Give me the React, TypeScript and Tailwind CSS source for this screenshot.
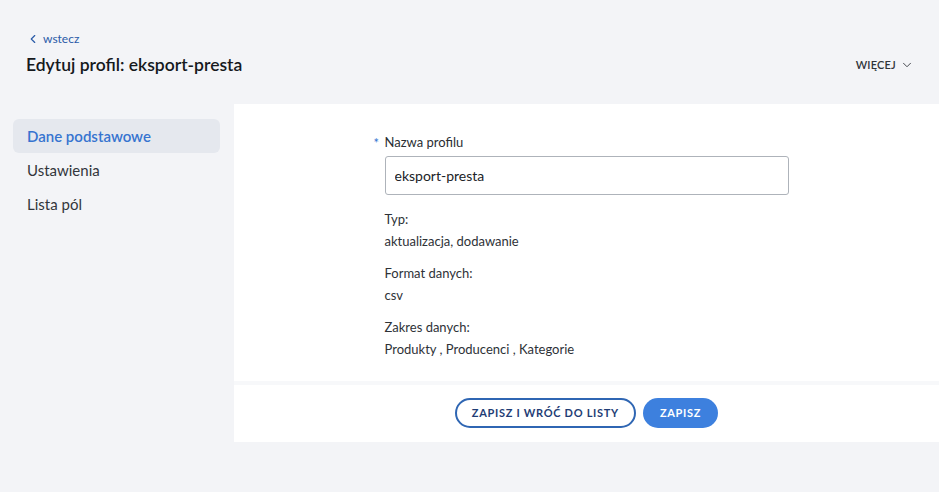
import { ChevronLeft, ChevronDown } from "lucide-react";

const details = [
  { label: "Typ:", value: "aktualizacja, dodawanie" },
  { label: "Format danych:", value: "csv" },
  { label: "Zakres danych:", value: "Produkty , Producenci , Kategorie" },
];

const nav = ["Dane podstawowe", "Ustawienia", "Lista pól"];

export default function App() {
  return (
    <div className="min-h-screen bg-[#f3f4f7] font-['Lato','Liberation_Sans',sans-serif] text-[#2a2e33]">
      <header className="flex items-end justify-between pl-[26px] pr-[25px] pt-[30px]">
        <div>
          <a href="#" className="flex items-center gap-[3px] text-[12px] text-[#2a5ba8]">
            <ChevronLeft className="h-[14px] w-[14px]" strokeWidth={2} />
            wstecz
          </a>
          <h1 className="mt-[4px] text-[17.5px] font-semibold text-[#16191d]">Edytuj profil: eksport-presta</h1>
        </div>
        <button className="mb-[5px] flex items-center gap-[4px] text-[11px] font-semibold tracking-[0.2px] text-[#30343a]">
          WIĘCEJ
          <ChevronDown className="h-[14px] w-[14px]" strokeWidth={1.5} />
        </button>
      </header>

      <div className="mt-[26px] flex">
        <nav className="w-[234px] shrink-0 pl-[13px] pr-[14px] pt-[15px]">
          {nav.map((item, i) => (
            <div
              key={item}
              className={
                i === 0
                  ? "flex h-[34px] items-center rounded-md bg-[#e5e8ee] pl-[14px] text-[15px] font-semibold text-[#3674d0]"
                  : "flex h-[34px] items-center pl-[14px] text-[15px] text-[#32363b]"
              }
            >
              {item}
            </div>
          ))}
        </nav>

        <main className="flex-1">
          <section className="bg-white pb-[21px] pt-[29px]">
            <div className="mx-auto w-[404px]">
              <label className="relative block text-[13px] text-[#2a2e33]">
                <span className="absolute -left-[11px] top-[1px] text-[13px] text-[#3674d0]">*</span>
                Nazwa profilu
              </label>
              <input
                defaultValue="eksport-presta"
                className="mt-[3px] h-[39px] w-full rounded-[3px] border border-[#aeb3ba] px-[9px] text-[14px] text-[#202327] outline-none"
              />
              <div className="mt-[13px] flex flex-col gap-[10px]">
                {details.map((d) => (
                  <div key={d.label} className="text-[13px] leading-[22px] text-[#2e3237]">
                    <div>{d.label}</div>
                    <div>{d.value}</div>
                  </div>
                ))}
              </div>
            </div>
          </section>
          <div className="h-[4px] bg-[#f7f8fa]" />
          <footer className="flex h-[57px] items-center justify-center gap-[7px] bg-white">
            <button className="h-[30px] rounded-full border-2 border-[#2f66b3] px-[15px] text-[11px] font-bold tracking-[0.7px] text-[#1f3d75]">
              ZAPISZ I WRÓĆ DO LISTY
            </button>
            <button className="h-[30px] rounded-full bg-[#3d80de] px-[17px] text-[11px] font-bold tracking-[0.7px] text-white">
              ZAPISZ
            </button>
          </footer>
        </main>
      </div>
    </div>
  );
}
